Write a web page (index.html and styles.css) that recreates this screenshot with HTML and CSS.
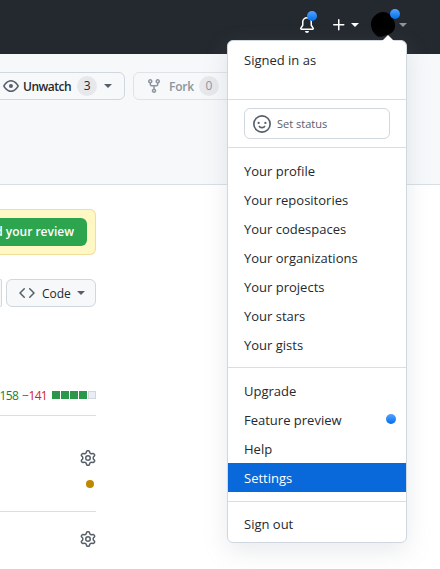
FILE: index.html
```html
<!DOCTYPE html>
<html lang="en">
<head>
<meta charset="utf-8">
<title>Pull request</title>
<link rel="stylesheet" href="styles.css">
</head>
<body>
<div class="page">
  <header class="topbar">
    <span class="nav-item bell">
      <svg width="16" height="16" viewBox="0 0 16 16" fill="#fff"><path d="M8 16a2 2 0 0 0 1.985-1.75c.017-.137-.097-.25-.235-.25h-3.5c-.138 0-.252.113-.235.25A2 2 0 0 0 8 16ZM3 5a5 5 0 0 1 10 0v2.947c0 .05.015.098.042.139l1.703 2.555A1.519 1.519 0 0 1 13.482 13H2.518a1.516 1.516 0 0 1-1.263-2.36l1.703-2.554A.255.255 0 0 0 3 7.947Zm5-3.5A3.5 3.5 0 0 0 4.5 5v2.947c0 .346-.102.683-.294.97l-1.703 2.556a.017.017 0 0 0-.003.01l.001.006c0 .002.002.004.004.006l.006.004.007.001h10.964l.007-.001.006-.004.004-.006.001-.007a.017.017 0 0 0-.003-.01l-1.703-2.554a1.745 1.745 0 0 1-.294-.97V5A3.5 3.5 0 0 0 8 1.5Z"/></svg>
      <span class="dot dot-bell"></span>
    </span>
    <span class="nav-item plus">
      <svg width="16" height="16" viewBox="0 0 16 16" fill="#fff"><path d="M7.75 2a.75.75 0 0 1 .75.75V7h4.25a.75.75 0 0 1 0 1.5H8.5v4.25a.75.75 0 0 1-1.5 0V8.5H2.75a.75.75 0 0 1 0-1.5H7V2.75A.75.75 0 0 1 7.75 2Z"/></svg>
      <span class="caret caret-white"></span>
    </span>
    <span class="nav-item avatar-wrap">
      <svg class="avatar" width="28" height="28" viewBox="0 0 28 28"><path d="M13 1c5 0 8 3 10 7 2 3 3 7 1 11-2 3-4 4-7 5-4 1-7 3-10 1-4-3-6-7-6-12C1 7 7 1 13 1Z" fill="#000"/></svg>
      <span class="dot dot-avatar"></span>
      <span class="caret caret-grey"></span>
    </span>
  </header>

  <section class="repohead">
    <div class="repo-actions">
      <span class="btn btn-watch">
        <svg width="16" height="16" viewBox="0 0 16 16" fill="#57606a"><path d="M8 2c1.981 0 3.671.992 4.933 2.078 1.27 1.091 2.187 2.345 2.637 3.023a1.62 1.62 0 0 1 0 1.798c-.45.678-1.367 1.932-2.637 3.023C11.67 13.008 9.981 14 8 14c-1.981 0-3.671-.992-4.933-2.078C1.797 10.83.88 9.576.43 8.898a1.62 1.62 0 0 1 0-1.798c.45-.677 1.367-1.931 2.637-3.022C4.33 2.992 6.019 2 8 2ZM1.679 7.932a.12.12 0 0 0 0 .136c.411.622 1.241 1.75 2.366 2.717C5.176 11.758 6.527 12.5 8 12.5c1.473 0 2.825-.742 3.955-1.715 1.124-.967 1.954-2.096 2.366-2.717a.12.12 0 0 0 0-.136c-.412-.621-1.242-1.75-2.366-2.717C10.824 4.242 9.473 3.5 8 3.5c-1.473 0-2.825.742-3.955 1.715-1.124.967-1.954 2.096-2.366 2.717ZM8 10a2 2 0 1 1-.001-3.999A2 2 0 0 1 8 10Z"/></svg>
        <span class="btn-label">Unwatch</span>
        <span class="counter">3</span>
        <span class="caret caret-dark"></span>
      </span>
      <span class="btn btn-fork">
        <svg width="16" height="16" viewBox="0 0 16 16" fill="#8c959f"><path d="M5 5.372v.878c0 .414.336.75.75.75h4.5a.75.75 0 0 0 .75-.75v-.878a2.25 2.25 0 1 1 1.5 0v.878a2.25 2.25 0 0 1-2.25 2.25h-1.5v2.128a2.251 2.251 0 1 1-1.5 0V8.5h-1.5A2.25 2.25 0 0 1 3.5 6.25v-.878a2.25 2.25 0 1 1 1.5 0ZM5 3.25a.75.75 0 1 0-1.5 0 .75.75 0 0 0 1.5 0Zm6.75.75a.75.75 0 1 0 0-1.5.75.75 0 0 0 0 1.5Zm-3 8.75a.75.75 0 1 0-1.5 0 .75.75 0 0 0 1.5 0Z"/></svg>
        <span class="btn-label">Fork</span>
        <span class="counter">0</span>
      </span>
    </div>
  </section>

  <main class="content">
    <div class="review-box">
      <span class="review-btn">Add your review</span>
    </div>
    <div class="tools">
      <span class="tool-stub"></span>
      <span class="btn btn-code">
        <svg width="16" height="16" viewBox="0 0 16 16" fill="#57606a"><path d="m11.28 3.22 4.25 4.25a.75.75 0 0 1 0 1.06l-4.25 4.25a.749.749 0 0 1-1.275-.326.749.749 0 0 1 .215-.734L13.94 8l-3.72-3.72a.749.749 0 0 1 .326-1.275.749.749 0 0 1 .734.215Zm-6.56 0a.751.751 0 0 1 1.042.018.751.751 0 0 1 .018 1.042L2.06 8l3.72 3.72a.749.749 0 0 1-.326 1.275.749.749 0 0 1-.734-.215L.47 8.53a.75.75 0 0 1 0-1.06Z"/></svg>
        <span class="btn-label">Code</span>
        <span class="caret caret-dark"></span>
      </span>
    </div>
    <div class="diffstat">
      <span class="add">158</span>
      <span class="del">−141</span>
      <span class="squares"><i class="sq"></i><i class="sq"></i><i class="sq"></i><i class="sq"></i><i class="sq sq-empty"></i></span>
    </div>
    <div class="meta meta-first">
      <svg class="gear" width="16" height="16" viewBox="0 0 16 16" fill="#57606a"><path d="M8 0a8.2 8.2 0 0 1 .701.031C9.444.095 9.99.645 10.16 1.29l.288 1.107c.018.066.079.158.212.224.231.114.454.243.668.386.123.082.233.09.299.071l1.103-.303c.644-.176 1.392.021 1.82.63.27.385.506.792.704 1.218.315.675.111 1.422-.364 1.891l-.814.806c-.049.048-.098.147-.088.294.016.257.016.515 0 .772-.01.147.038.246.088.294l.814.806c.475.469.679 1.216.364 1.891a7.977 7.977 0 0 1-.704 1.217c-.428.61-1.176.807-1.82.63l-1.102-.302c-.067-.019-.177-.011-.3.071a5.909 5.909 0 0 1-.668.386c-.133.066-.194.158-.211.224l-.29 1.106c-.168.646-.715 1.196-1.458 1.26a8.006 8.006 0 0 1-1.402 0c-.743-.064-1.289-.614-1.458-1.26l-.289-1.106c-.018-.066-.079-.158-.212-.224a5.738 5.738 0 0 1-.668-.386c-.123-.082-.233-.09-.299-.071l-1.103.303c-.644.176-1.392-.021-1.82-.63a8.12 8.12 0 0 1-.704-1.218c-.315-.675-.111-1.422.363-1.891l.815-.806c.05-.048.098-.147.088-.294a6.214 6.214 0 0 1 0-.772c.01-.147-.038-.246-.088-.294l-.815-.806C.635 6.045.431 5.298.746 4.623a7.92 7.92 0 0 1 .704-1.217c.428-.61 1.176-.807 1.82-.63l1.102.302c.067.019.177.011.3-.071.214-.143.437-.272.668-.386.133-.066.194-.158.211-.224l.29-1.106C6.009.645 6.556.095 7.299.03 7.53.01 7.764 0 8 0Zm-.571 1.525c-.036.003-.108.036-.137.146l-.289 1.105c-.147.561-.549.967-.998 1.189-.173.086-.34.183-.5.29-.417.278-.97.423-1.529.27l-1.103-.303c-.109-.03-.175.016-.195.045-.22.312-.412.644-.573.99-.014.031-.021.11.059.19l.815.806c.411.406.562.957.53 1.456a4.709 4.709 0 0 0 0 .582c.032.499-.119 1.05-.53 1.456l-.815.806c-.081.08-.073.159-.059.19.162.346.353.677.573.989.02.03.085.076.195.046l1.102-.303c.56-.153 1.113-.008 1.53.27.161.107.328.204.501.29.447.222.85.629.997 1.189l.289 1.105c.029.109.101.143.137.146a6.6 6.6 0 0 0 1.142 0c.036-.003.108-.036.137-.146l.289-1.105c.147-.561.549-.967.998-1.189.173-.086.34-.183.5-.29.417-.278.97-.423 1.529-.27l1.103.303c.109.029.175-.016.195-.045.22-.313.411-.644.573-.99.014-.031.021-.11-.059-.19l-.815-.806c-.411-.406-.562-.957-.53-1.456a4.709 4.709 0 0 0 0-.582c-.032-.499.119-1.05.53-1.456l.815-.806c.081-.08.073-.159.059-.19a6.464 6.464 0 0 0-.573-.989c-.02-.03-.085-.076-.195-.046l-1.102.303c-.56.153-1.113.008-1.53-.27a4.44 4.44 0 0 0-.501-.29c-.447-.222-.85-.629-.997-1.189l-.289-1.105c-.029-.11-.101-.143-.137-.146a6.6 6.6 0 0 0-1.142 0ZM11 8a3 3 0 1 1-6 0 3 3 0 0 1 6 0ZM9.5 8a1.5 1.5 0 1 0-3.001.001A1.5 1.5 0 0 0 9.5 8Z"/></svg>
      <span class="status-dot"></span>
    </div>
    <div class="meta meta-second">
      <svg class="gear" width="16" height="16" viewBox="0 0 16 16" fill="#57606a"><path d="M8 0a8.2 8.2 0 0 1 .701.031C9.444.095 9.99.645 10.16 1.29l.288 1.107c.018.066.079.158.212.224.231.114.454.243.668.386.123.082.233.09.299.071l1.103-.303c.644-.176 1.392.021 1.82.63.27.385.506.792.704 1.218.315.675.111 1.422-.364 1.891l-.814.806c-.049.048-.098.147-.088.294.016.257.016.515 0 .772-.01.147.038.246.088.294l.814.806c.475.469.679 1.216.364 1.891a7.977 7.977 0 0 1-.704 1.217c-.428.61-1.176.807-1.82.63l-1.102-.302c-.067-.019-.177-.011-.3.071a5.909 5.909 0 0 1-.668.386c-.133.066-.194.158-.211.224l-.29 1.106c-.168.646-.715 1.196-1.458 1.26a8.006 8.006 0 0 1-1.402 0c-.743-.064-1.289-.614-1.458-1.26l-.289-1.106c-.018-.066-.079-.158-.212-.224a5.738 5.738 0 0 1-.668-.386c-.123-.082-.233-.09-.299-.071l-1.103.303c-.644.176-1.392-.021-1.82-.63a8.12 8.12 0 0 1-.704-1.218c-.315-.675-.111-1.422.363-1.891l.815-.806c.05-.048.098-.147.088-.294a6.214 6.214 0 0 1 0-.772c.01-.147-.038-.246-.088-.294l-.815-.806C.635 6.045.431 5.298.746 4.623a7.92 7.92 0 0 1 .704-1.217c.428-.61 1.176-.807 1.82-.63l1.102.302c.067.019.177.011.3-.071.214-.143.437-.272.668-.386.133-.066.194-.158.211-.224l.29-1.106C6.009.645 6.556.095 7.299.03 7.53.01 7.764 0 8 0Zm-.571 1.525c-.036.003-.108.036-.137.146l-.289 1.105c-.147.561-.549.967-.998 1.189-.173.086-.34.183-.5.29-.417.278-.97.423-1.529.27l-1.103-.303c-.109-.03-.175.016-.195.045-.22.312-.412.644-.573.99-.014.031-.021.11.059.19l.815.806c.411.406.562.957.53 1.456a4.709 4.709 0 0 0 0 .582c.032.499-.119 1.05-.53 1.456l-.815.806c-.081.08-.073.159-.059.19.162.346.353.677.573.989.02.03.085.076.195.046l1.102-.303c.56-.153 1.113-.008 1.53.27.161.107.328.204.501.29.447.222.85.629.997 1.189l.289 1.105c.029.109.101.143.137.146a6.6 6.6 0 0 0 1.142 0c.036-.003.108-.036.137-.146l.289-1.105c.147-.561.549-.967.998-1.189.173-.086.34-.183.5-.29.417-.278.97-.423 1.529-.27l1.103.303c.109.029.175-.016.195-.045.22-.313.411-.644.573-.99.014-.031.021-.11-.059-.19l-.815-.806c-.411-.406-.562-.957-.53-1.456a4.709 4.709 0 0 0 0-.582c-.032-.499.119-1.05.53-1.456l.815-.806c.081-.08.073-.159.059-.19a6.464 6.464 0 0 0-.573-.989c-.02-.03-.085-.076-.195-.046l-1.102.303c-.56.153-1.113.008-1.53-.27a4.44 4.44 0 0 0-.501-.29c-.447-.222-.85-.629-.997-1.189l-.289-1.105c-.029-.11-.101-.143-.137-.146a6.6 6.6 0 0 0-1.142 0ZM11 8a3 3 0 1 1-6 0 3 3 0 0 1 6 0ZM9.5 8a1.5 1.5 0 1 0-3.001.001A1.5 1.5 0 0 0 9.5 8Z"/></svg>
    </div>
  </main>

  <nav class="menu">
    <div class="menu-head">Signed in as</div>
    <div class="menu-section menu-status">
      <span class="status-btn">
        <svg width="18" height="18" viewBox="0 0 16 16" fill="#57606a"><path d="M8 0a8 8 0 1 1 0 16A8 8 0 0 1 8 0ZM1.5 8a6.5 6.5 0 1 0 13 0 6.5 6.5 0 0 0-13 0Zm3.82 1.636a.75.75 0 0 1 1.038.175l.007.009c.103.118.22.222.35.31.264.178.683.37 1.285.37.602 0 1.02-.192 1.285-.371.13-.088.247-.192.35-.31l.007-.008a.75.75 0 0 1 1.222.87l-.022-.015c.02.013.021.015.021.015v.001l-.001.002-.002.003-.005.007-.014.019a2.066 2.066 0 0 1-.184.213c-.16.166-.338.316-.53.445-.63.418-1.37.638-2.127.629-.946 0-1.652-.308-2.126-.63a3.331 3.331 0 0 1-.715-.657l-.014-.02-.005-.006-.002-.003v-.002h-.001l.613-.432-.614.43a.75.75 0 0 1 .183-1.044ZM12 7a1 1 0 1 1-2 0 1 1 0 0 1 2 0ZM5 8a1 1 0 1 1 0-2 1 1 0 0 1 0 2Zm5.25 2.25.592.416a97.71 97.71 0 0 0-.592-.416Z"/></svg>
        <span>Set status</span>
      </span>
    </div>
    <div class="menu-section menu-list">
      <a class="menu-item">Your profile</a>
      <a class="menu-item">Your repositories</a>
      <a class="menu-item">Your codespaces</a>
      <a class="menu-item">Your organizations</a>
      <a class="menu-item">Your projects</a>
      <a class="menu-item">Your stars</a>
      <a class="menu-item">Your gists</a>
    </div>
    <div class="menu-section menu-list menu-list-tight">
      <a class="menu-item">Upgrade</a>
      <a class="menu-item menu-item-dot">Feature preview<span class="dot dot-menu"></span></a>
      <a class="menu-item">Help</a>
      <a class="menu-item menu-item-active">Settings</a>
    </div>
    <div class="menu-section menu-foot">
      <a class="menu-item">Sign out</a>
    </div>
  </nav>
</div>
</body>
</html>
```
FILE: styles.css
```css
* { box-sizing: border-box; }
html, body { margin: 0; padding: 0; }
body {
  font-family: "Open Sans", "Noto Sans", sans-serif;
  font-size: 12px;
  color: #24292f;
  background: #fff;
}
svg { flex: none; }
.page {
  position: relative;
  width: 440px;
  height: 569px;
  overflow: hidden;
  display: flex;
  flex-direction: column;
}

/* top bar */
.topbar {
  height: 54px;
  flex: none;
  background: #24292f;
  display: flex;
  align-items: center;
  justify-content: flex-end;
  padding: 0 33px 5px 0;
}
.nav-item { position: relative; display: flex; align-items: center; }
.bell { margin-right: 16px; }
.plus { margin-right: 11px; gap: 4px; }
.avatar { display: block; }
.dot { position: absolute; border-radius: 50%; background: linear-gradient(#54a3ff, #006eed); }
.dot-bell { width: 10px; height: 10px; top: -6px; right: -2px; }
.dot-avatar { width: 10px; height: 10px; top: -2px; right: 7px; }
.dot-menu { width: 10px; height: 10px; top: 9px; right: 10px; }
.caret {
  display: inline-block;
  width: 0;
  height: 0;
  flex: none;
  border-style: solid;
  border-width: 4px 4px 0;
  border-color: transparent;
}
.caret-white { border-top-color: #fff; }
.caret-grey { border-top-color: #8c959f; margin-left: 1px; }
.caret-dark { border-top-color: #57606a; }

/* repo head */
.repohead {
  height: 131px;
  flex: none;
  background: #f6f8fa;
  border-bottom: 1px solid #d8dee4;
  padding-top: 18px;
}
.repo-actions { display: flex; gap: 8px; margin-left: -12px; }
.btn {
  display: inline-flex;
  align-items: center;
  height: 28px;
  background: #f6f8fa;
  border: 1px solid #d0d7de;
  border-radius: 6px;
  font-size: 12px;
  font-weight: 600;
}
.btn-watch { padding: 0 12px 0 14px; width: 137px; }
.btn-watch .btn-label { margin-left: 4px; letter-spacing: -0.5px; }
.btn-watch .counter { margin-left: 6px; }
.btn-watch .caret { margin-left: 7px; }
.btn-fork { width: 120px; padding-left: 12px; color: #8c959f; border-color: #dfe3e8; }
.btn-fork .btn-label { margin-left: 7px; letter-spacing: -0.2px; }
.btn-fork .counter { margin-left: 5px; color: #8c959f; }
.counter {
  min-width: 20px;
  height: 20px;
  border-radius: 10px;
  background: #e6e8eb;
  font-weight: 400;
  text-align: center;
  line-height: 20px;
}

/* main column, cut off by the window's left edge */
.content {
  width: 96px;
  flex: 1;
  display: flex;
  flex-direction: column;
  align-items: flex-end;
}
.review-box {
  width: 96px;
  height: 46px;
  margin-top: 24px;
  flex: none;
  display: flex;
  justify-content: flex-end;
  align-items: center;
  overflow: hidden;
  background: #fff8c5;
  border: 1px solid #f2dd9a;
  border-left: 0;
  border-radius: 0 6px 6px 0;
  padding-right: 8px;
}
.review-btn {
  flex: none;
  height: 28px;
  padding: 0 13px;
  line-height: 27px;
  background: #2da44e;
  color: #fff;
  font-weight: 600;
  font-size: 12px;
  border-radius: 6px;
}
.tools {
  width: 96px;
  margin-top: 24px;
  display: flex;
  justify-content: space-between;
  flex: none;
}
.tool-stub {
  width: 2px;
  height: 28px;
  background: #f6f8fa;
  border: 1px solid #d0d7de;
  border-left: 0;
  border-radius: 0 6px 6px 0;
}
.btn-code { width: 90px; padding-left: 12px; }
.btn-code .btn-label { margin-left: 7px; font-weight: 500; }
.btn-code .caret { margin-left: 6px; }
.diffstat {
  width: 96px;
  height: 20px;
  margin-top: 78px;
  flex: none;
  display: flex;
  justify-content: flex-end;
  align-items: center;
  font-size: 12px;
}
.add { color: #1a7f37; letter-spacing: -0.6px; }
.del { color: #cf222e; margin-left: 4px; letter-spacing: -0.7px; }
.squares { display: flex; gap: 1px; margin-left: 5px; }
.sq { display: block; width: 8px; height: 8px; background: #2c974b; }
.sq-empty { background: #eaeef2; border: 1px solid #d0d7de; }
.meta {
  width: 96px;
  border-top: 1px solid #d8dee4;
  flex: none;
  padding-top: 34px;
  height: 96px;
}
.meta-first { margin-top: 10px; }
.meta-second { padding-top: 19px; }
.gear { display: block; margin-left: 80px; }
.status-dot {
  display: block;
  width: 8px;
  height: 8px;
  margin: 14px 0 0 86px;
  border-radius: 50%;
  background: #bf8700;
}

/* account dropdown */
.menu {
  position: absolute;
  left: 227px;
  top: 40px;
  width: 180px;
  height: 503px;
  background: #fff;
  border: 1px solid #d0d7de;
  border-radius: 6px;
  box-shadow: 0 8px 24px rgba(140, 149, 159, 0.2);
  color: #24292f;
  font-size: 13px;
}
.menu::before {
  content: "";
  position: absolute;
  top: -6px;
  left: 153px;
  border-style: solid;
  border-width: 0 7px 7px;
  border-color: transparent transparent #fff;
}
.menu-head { height: 58px; padding: 10px 16px 0; line-height: 18px; }
.menu-section { border-top: 1px solid #d8dee4; }
.menu-status { height: 48px; padding: 8px 16px 0; }
.status-btn {
  display: flex;
  align-items: center;
  gap: 6px;
  height: 31px;
  padding-left: 8px;
  border: 1px solid #d0d7de;
  border-radius: 6px;
  font-size: 11px;
  color: #57606a;
}
.menu-list { padding: 9px 0 7px; height: 220px; }
.menu-list-tight { height: 134px; padding: 8px 0 0; }
.menu-list-tight .menu-item { line-height: 31px; }
.menu-foot { padding-top: 8px; }
.menu-item {
  position: relative;
  display: block;
  height: 29px;
  line-height: 29px;
  padding-left: 16px;
}
.menu-item-active { background: #0969da; color: #fff; }
```
